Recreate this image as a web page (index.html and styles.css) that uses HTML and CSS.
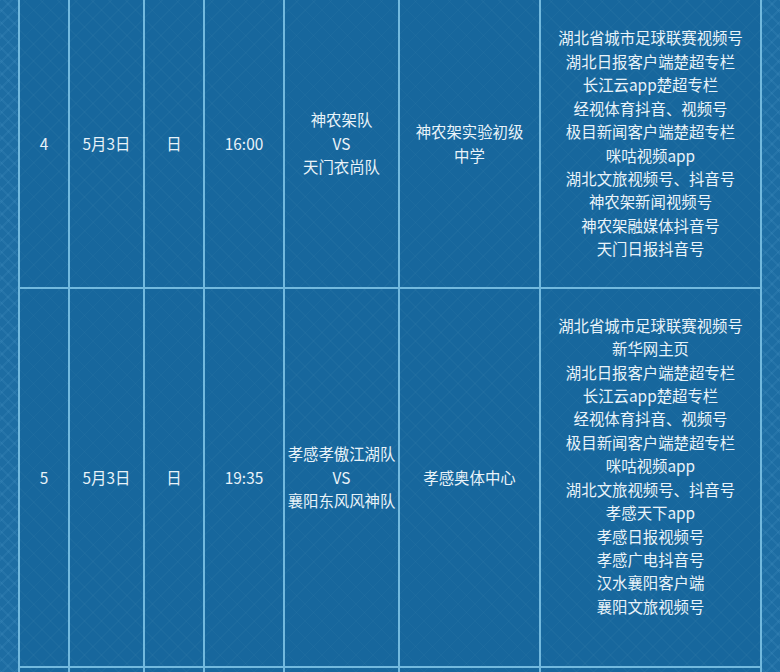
FILE: index.html
```html
<!DOCTYPE html>
<html lang="zh-CN">
<head>
<meta charset="utf-8">
<title>赛程表</title>
<link rel="stylesheet" href="styles.css">
</head>
<body>
<div class="page">
  <table class="schedule">
    <colgroup>
      <col class="c-no"><col class="c-date"><col class="c-day"><col class="c-time"><col class="c-teams"><col class="c-venue"><col class="c-media">
    </colgroup>
    <tbody>
      <tr class="row-a">
        <td>4</td>
        <td>5月3日</td>
        <td>日</td>
        <td>16:00</td>
        <td class="teams">神农架队<br>VS<br>天门衣尚队</td>
        <td class="venue">神农架实验初级中学</td>
        <td class="media">
          <div>湖北省城市足球联赛视频号</div>
          <div>湖北日报客户端楚超专栏</div>
          <div>长江云app楚超专栏</div>
          <div>经视体育抖音、视频号</div>
          <div>极目新闻客户端楚超专栏</div>
          <div>咪咕视频app</div>
          <div>湖北文旅视频号、抖音号</div>
          <div>神农架新闻视频号</div>
          <div>神农架融媒体抖音号</div>
          <div>天门日报抖音号</div>
        </td>
      </tr>
      <tr class="row-b">
        <td>5</td>
        <td>5月3日</td>
        <td>日</td>
        <td>19:35</td>
        <td class="teams">孝感孝傲江湖队<br>VS<br>襄阳东风风神队</td>
        <td class="venue">孝感奥体中心</td>
        <td class="media">
          <div class="list-pad">
            <div>湖北省城市足球联赛视频号</div>
            <div>新华网主页</div>
            <div>湖北日报客户端楚超专栏</div>
            <div>长江云app楚超专栏</div>
            <div>经视体育抖音、视频号</div>
            <div>极目新闻客户端楚超专栏</div>
            <div>咪咕视频app</div>
            <div>湖北文旅视频号、抖音号</div>
            <div>孝感天下app</div>
            <div>孝感日报视频号</div>
            <div>孝感广电抖音号</div>
            <div>汉水襄阳客户端</div>
            <div>襄阳文旅视频号</div>
          </div>
        </td>
      </tr>
      <tr class="row-c">
        <td></td><td></td><td></td><td></td><td></td><td></td><td></td>
      </tr>
    </tbody>
  </table>
</div>
</body>
</html>
```

FILE: styles.css
```css
html, body {
  margin: 0;
  padding: 0;
}

body {
  width: 780px;
  height: 672px;
  overflow: hidden;
  background-color: #1d6da3;
  background-image:
    repeating-linear-gradient(45deg, rgba(120, 190, 230, 0.09) 0 2px, transparent 2px 9px),
    repeating-linear-gradient(-45deg, rgba(120, 190, 230, 0.09) 0 2px, transparent 2px 9px);
  font-family: "Noto Sans CJK SC", "Noto Sans", sans-serif;
  color: #e9f3f9;
}

.page {
  padding: 0 20px 0 18px;
}

.schedule {
  width: 742px;
  table-layout: fixed;
  border-collapse: collapse;
  background-color: #17679d;
  background-image:
    repeating-linear-gradient(45deg, rgba(255, 255, 255, 0.025) 0 1px, transparent 1px 12px),
    repeating-linear-gradient(-45deg, rgba(255, 255, 255, 0.025) 0 1px, transparent 1px 12px);
  font-size: 15.4px;
  line-height: 23.4px;
}

.c-no { width: 50px; }
.c-date { width: 75px; }
.c-day { width: 60px; }
.c-time { width: 80px; }
.c-teams { width: 115px; }
.c-venue { width: 141px; }
.c-media { width: 221px; }

.schedule td {
  border: 2px solid #72b9de;
  text-align: center;
  vertical-align: middle;
  padding: 0 10px;
  white-space: nowrap;
}

.schedule td.venue {
  white-space: normal;
}

.schedule td.teams {
  padding: 0 2px;
}

.schedule tr:first-child td {
  border-top: none;
}

.row-a td { height: 287px; }
.row-b td { height: 377px; }
.row-c td { height: 40px; }

.schedule td.media {
  padding: 0 4px;
}

.list-pad {
  padding-bottom: 23px;
}
```
